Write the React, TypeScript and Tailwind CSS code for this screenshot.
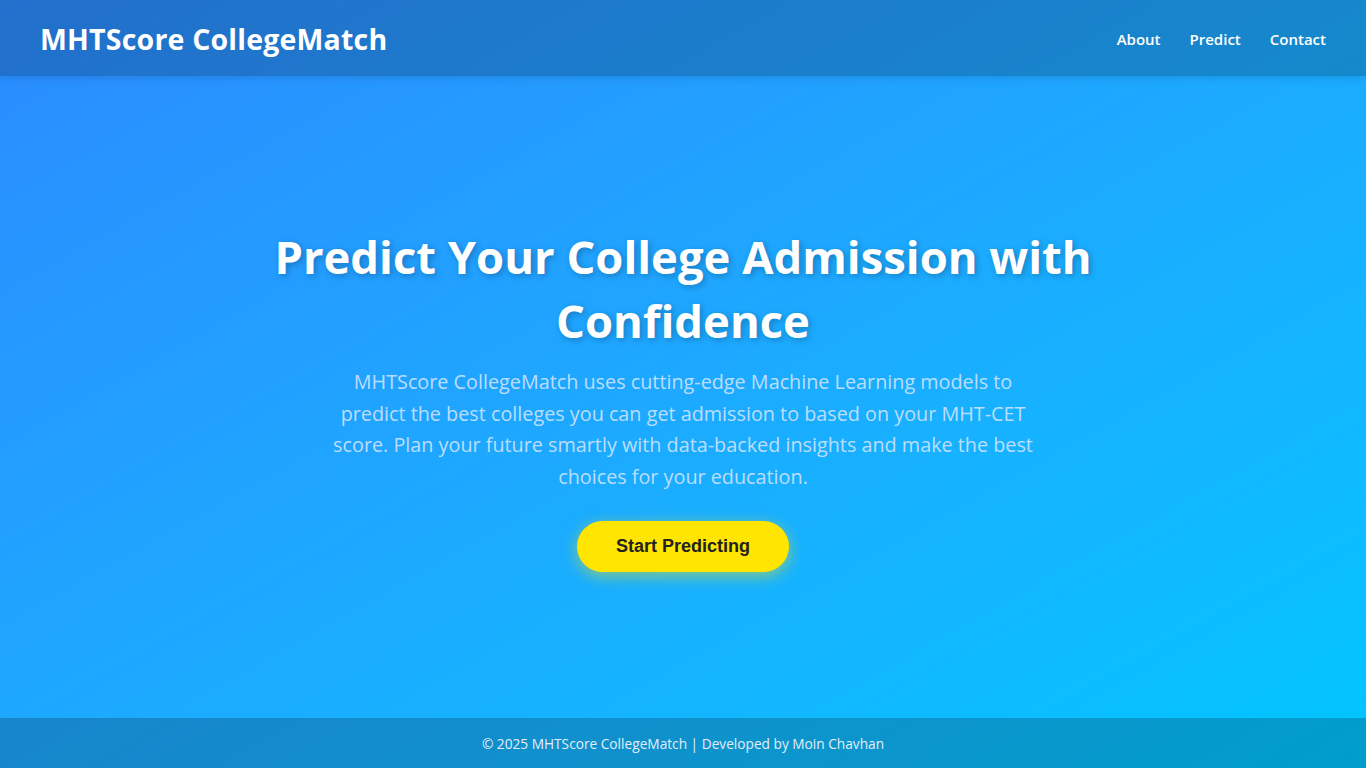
import React from "react";

export default function App() {
  const font = { fontFamily: '"Open Sans", "Noto Sans", sans-serif' };

  return (
    <div
      className="min-h-screen flex flex-col bg-gradient-to-br from-[#2b8bff] to-[#00c6ff] text-white"
      style={font}
    >
      {/* Header */}
      <header className="h-[76px] flex items-center justify-between px-10 pt-[3px] bg-black/20 shadow-[0_2px_8px_rgba(0,0,0,0.12)]">
        <h1 className="text-[28.5px] font-bold tracking-[0.2px]">MHTScore CollegeMatch</h1>
        <nav className="flex items-center gap-[29px] text-[15px] font-semibold">
          <a href="#">About</a>
          <a href="#">Predict</a>
          <a href="#">Contact</a>
        </nav>
      </header>

      {/* Hero */}
      <main className="flex-1 flex flex-col items-center justify-center text-center px-6 pt-[2px]">
        <h2 className="text-[45.4px] leading-[64px] font-bold max-w-[860px] [text-shadow:2px_2px_6px_rgba(0,0,0,0.25)]">
          Predict Your College Admission with Confidence
        </h2>
        <p className="mt-[14px] max-w-[712px] text-[19.8px] leading-[31.5px] text-[#d0e4ff]/90">
          MHTScore CollegeMatch uses cutting-edge Machine Learning models to predict the best colleges you
          can get admission to based on your MHT-CET score. Plan your future smartly with data-backed
          insights and make the best choices for your education.
        </p>
        <button
          className="mt-[29px] w-[212px] h-[51px] rounded-full bg-[#ffe500] text-[#222] text-[18px] font-bold shadow-[0_4px_15px_rgba(255,230,0,0.5)]"
          style={{ fontFamily: '"Liberation Sans", Arial, sans-serif' }}
        >
          Start Predicting
        </button>
      </main>

      {/* Footer */}
      <footer className="h-[50px] flex items-center justify-center pt-[3px] bg-black/20 text-[13.7px] text-[#e2eef8]">
        © 2025 MHTScore CollegeMatch | Developed by Moin Chavhan
      </footer>
    </div>
  );
}
